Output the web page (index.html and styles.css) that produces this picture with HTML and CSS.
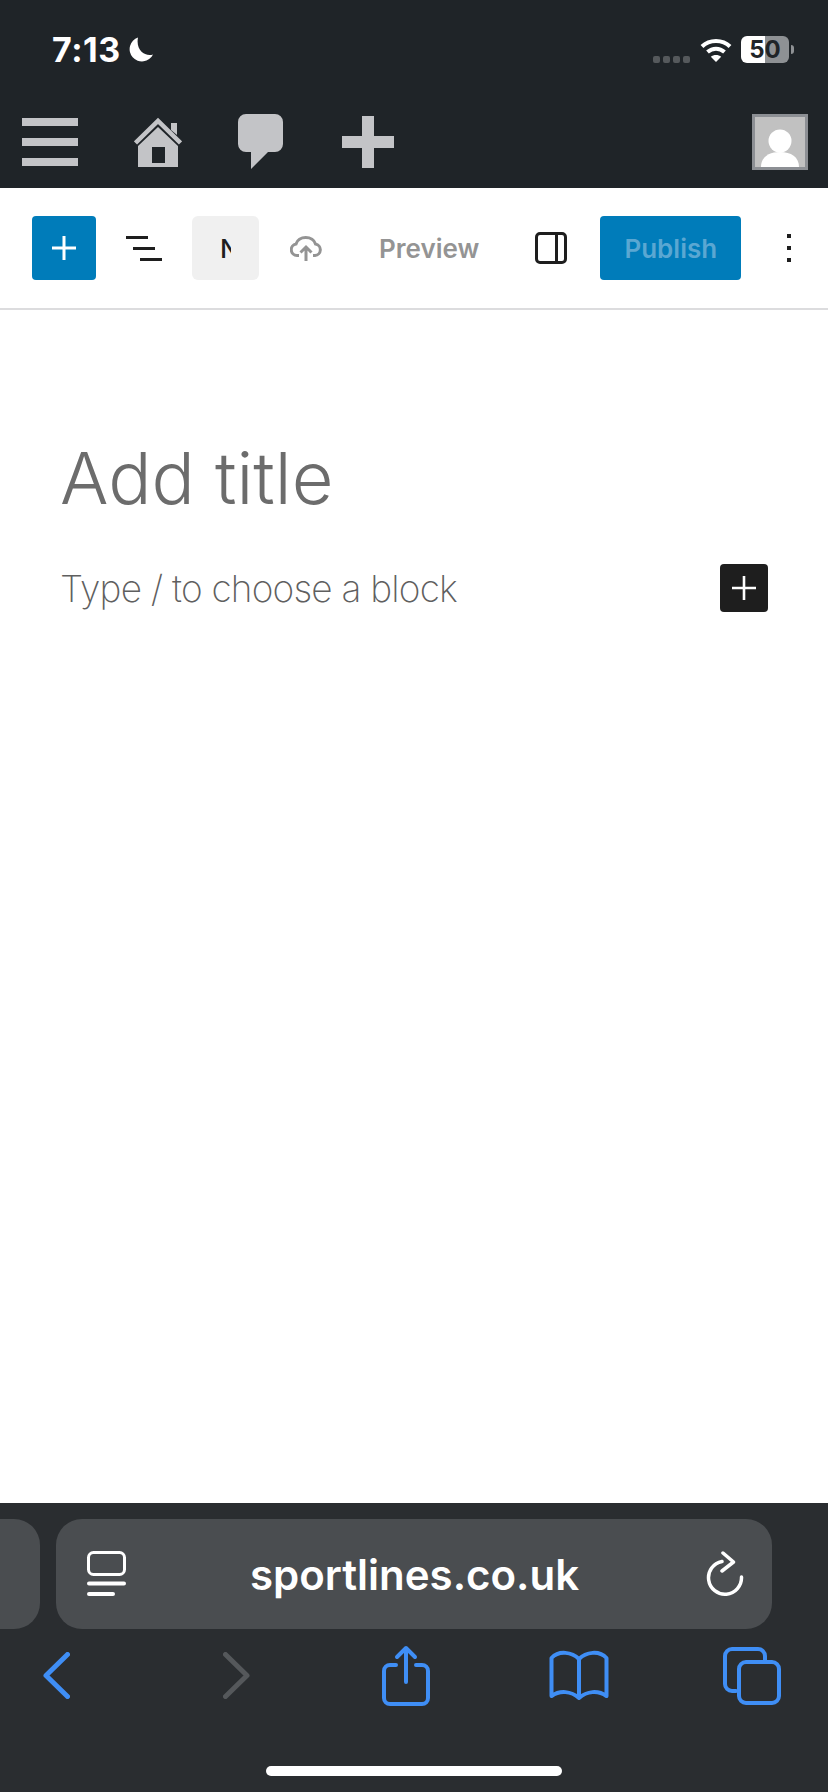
FILE: index.html
```html
<!DOCTYPE html>
<html lang="en">
<head>
    <meta charset="UTF-8">
    <meta name="viewport" content="width=device-width, initial-scale=1.0">
    <title>Add title</title>
    <link rel="stylesheet" href="styles.css">
</head>
<body>
    <!-- Phone status bar -->
    <div class="status-bar">
        <span class="clock">7:13</span>
        <svg class="moon" width="24" height="25" viewBox="0 0 24 25"><path d="M9 0.5A12.3 12.3 0 1 0 24 17.5C16 20 6.500 13 9 0.500Z" fill="#fff"/></svg>
        <span class="signal"><i></i><i></i><i></i><i></i></span>
        <svg class="wifi" width="32" height="24" viewBox="0 0 32 24" fill="none" stroke="#fff" stroke-width="4">
            <path d="M2 8.500C9.500 1 22.500 1 30 8.500"/>
            <path d="M7.500 14C12.500 9.500 19.500 9.500 24.500 14"/>
            <path d="M16 24L10.800 18.800C13.500 16.500 18.500 16.500 21.200 18.800Z" fill="#fff" stroke="none"/>
        </svg>
        <span class="battery">50</span>
        <span class="battery-nub"></span>
    </div>

    <!-- WP admin bar -->
    <div class="admin-bar">
        <span class="menu-icon"><i></i><i></i><i></i></span>
        <svg width="48" height="50" viewBox="0 0 48 50">
            <path fill="#c3c4c7" fill-rule="evenodd" d="M4 29L24 10L44 29V50H4ZM18 30V46H31V30Z"/>
            <path fill="#c3c4c7" d="M37 6H43V18L37 13Z"/>
            <path fill="none" stroke="#c3c4c7" stroke-width="4.500" d="M1.500 26L24 4L46.500 26"/>
        </svg>
        <svg width="45" height="55" viewBox="0 0 45 55"><path fill="#c3c4c7" d="M8 0H37A8 8 0 0 1 45 8V30A8 8 0 0 1 37 38H30L13 55V38H8A8 8 0 0 1 0 30V8A8 8 0 0 1 8 0Z"/></svg>
        <svg class="admin-new" width="52" height="52" viewBox="0 0 52 52"><path fill="#c3c4c7" d="M20 0H32V20H52V32H32V52H20V32H0V20H20Z"/></svg>
        <span class="avatar">
            <svg width="50" height="50" viewBox="0 0 50 50"><circle cx="25" cy="24" r="11.500" fill="#fff"/><path fill="#fff" d="M6 50C6 40 14 35 25 35C36 35 44 40 44 50Z"/></svg>
        </span>
    </div>

    <!-- Editor toolbar -->
    <div class="toolbar">
        <button class="tool-add">
            <svg width="24" height="24" viewBox="0 0 24 24"><path fill="#fff" d="M10.500 0H13.500V10.500H24V13.500H13.500V24H10.500V13.500H0V10.500H10.500Z"/></svg>
        </button>
        <svg class="tool-list" width="36" height="25" viewBox="0 0 36 25" fill="#1e1e1e"><rect x="0" y="0" width="22" height="3"/><rect x="7" y="11" width="22" height="3"/><rect x="14" y="22" width="22" height="3"/></svg>
        <button class="tool-doc"><span>N</span></button>
        <svg class="tool-cloud" width="32" height="26" viewBox="0 0 32 26" fill="none" stroke="#949494" stroke-width="3">
            <path d="M9 20.500H7A5.800 5.800 0 0 1 6 9A10 8.500 0 0 1 25.500 9A5.800 5.800 0 0 1 25 20.500H23"/>
            <path d="M16 26V12M10.500 17.500L16 12L21.500 17.500"/>
        </svg>
        <span class="tool-preview">Preview</span>
        <svg class="tool-panel" width="32" height="32" viewBox="0 0 32 32" fill="none" stroke="#1e1e1e" stroke-width="3"><rect x="1.500" y="1.500" width="29" height="29" rx="3.500"/><path d="M21.500 2V30"/></svg>
        <button class="tool-publish">Publish</button>
        <span class="tool-more"><i></i><i></i><i></i></span>
    </div>

    <!-- Post content -->
    <div class="content">
        <h1 class="post-title">Add title</h1>
        <div class="block-row">
            <p class="block-hint">Type / to choose a block</p>
            <button class="block-add">
                <svg width="24" height="24" viewBox="0 0 24 24"><path fill="#fff" d="M10.700 0H13.300V10.700H24V13.300H13.300V24H10.700V13.300H0V10.700H10.700Z"/></svg>
            </button>
        </div>
    </div>

    <!-- Safari bottom bar -->
    <div class="browser-bar">
        <div class="url-row">
            <div class="prev-tab"></div>
            <div class="url-pill">
                <svg width="39" height="46" viewBox="0 0 39 46" fill="none" stroke="#fff"><rect x="1.500" y="1.500" width="36" height="22" rx="5" stroke-width="3"/><path d="M2 32.500H37M2 43H26" stroke-width="4" stroke-linecap="round"/></svg>
                <span class="url-text">sportlines.co.uk</span>
                <svg width="38" height="46" viewBox="0 0 38 46" fill="none" stroke="#fff" stroke-width="3.500" stroke-linecap="round" stroke-linejoin="round">
                    <path d="M16 10.500A16.500 16.500 0 1 0 35.500 26"/>
                    <path d="M17 2L27.500 11L16 20"/>
                </svg>
            </div>
        </div>
        <div class="nav-row">
            <svg width="27" height="47" viewBox="0 0 27 47" fill="none" stroke="#3f8ef5" stroke-width="5" stroke-linecap="round" stroke-linejoin="round"><path d="M24.500 2.500L3 23.500L24.500 44.500"/></svg>
            <svg class="nav-forward" width="27" height="47" viewBox="0 0 27 47" fill="none" stroke="#55585b" stroke-width="5" stroke-linecap="round" stroke-linejoin="round"><path d="M2.500 2.500L24 23.500L2.500 44.500"/></svg>
            <svg class="nav-share" width="48" height="61" viewBox="0 0 48 61" fill="none" stroke="#3f8ef5" stroke-width="4" stroke-linecap="round" stroke-linejoin="round">
                <path d="M14 20H8A6 6 0 0 0 2 26V53A6 6 0 0 0 8 59H40A6 6 0 0 0 46 53V26A6 6 0 0 0 40 20H34"/>
                <path d="M24 37V3M15 12L24 3L33 12"/>
            </svg>
            <svg class="nav-book" width="60" height="51" viewBox="0 0 60 51" fill="none" stroke="#3f8ef5" stroke-width="4" stroke-linecap="round" stroke-linejoin="round">
                <path d="M30 9C23 2 10 0 2.500 8V46C11 40 22 41 30 48C38 41 49 40 57.500 46V8C50 0 37 2 30 9V47"/>
            </svg>
            <svg class="nav-tabs" width="58" height="58" viewBox="0 0 58 58" fill="none" stroke="#3f8ef5" stroke-width="4" stroke-linecap="round" stroke-linejoin="round">
                <path d="M13 44H9A7 7 0 0 1 2 37V9A7 7 0 0 1 9 2H35A7 7 0 0 1 42 9V14"/>
                <rect x="16" y="15" width="40" height="41" rx="7"/>
            </svg>
        </div>
        <div class="home-bar"></div>
    </div>
</body>
</html>
```

FILE: styles.css
```css
body {
    font-family: 'Inter', sans-serif;
    display: flex;
    flex-direction: column;
    width: 828px;
    height: 1792px;
    margin: 0;
    overflow: hidden;
    background-color: #fff;
}

button {
    border: none;
    padding: 0;
    font-family: inherit;
}

svg {
    display: block;
    flex: none;
}

/* status bar */

.status-bar {
    display: flex;
    align-items: center;
    height: 95px;
    padding: 4px 34px 0 52px;
    box-sizing: border-box;
    background-color: #1f2428;
}

.clock {
    font-size: 34px;
    font-weight: 700;
    color: #fff;
    letter-spacing: 0.5px;
}

.moon {
    margin-left: 8px;
}

.signal {
    display: flex;
    gap: 3px;
    margin: 20px 0 0 auto;
}

.signal i {
    width: 7px;
    height: 7px;
    border-radius: 2px;
    background-color: #55595c;
}

.wifi {
    margin-left: 10px;
}

.battery {
    width: 48px;
    height: 27px;
    margin-left: 9px;
    border-radius: 6px;
    background: linear-gradient(to right, #fff 50%, #8e9194 50%);
    font-size: 24px;
    font-weight: 700;
    line-height: 27px;
    text-align: center;
    color: #1f2428;
}

.battery-nub {
    width: 3px;
    height: 9px;
    margin-left: 2px;
    border-radius: 0 3px 3px 0;
    background-color: #8e9194;
}

/* admin bar */

.admin-bar {
    display: flex;
    align-items: center;
    gap: 56px;
    height: 93px;
    padding: 0 20px 0 22px;
    box-sizing: border-box;
    background-color: #1f2428;
}

.admin-new {
    margin-left: 3px;
}

.menu-icon {
    display: flex;
    flex-direction: column;
    gap: 12px;
    width: 56px;
}

.menu-icon i {
    height: 8px;
    background-color: #c3c4c7;
}

.avatar {
    width: 56px;
    height: 56px;
    margin-left: auto;
    border: 3px solid #8c8f94;
    box-sizing: border-box;
    background-color: #c1c1c1;
}

/* editor toolbar */

.toolbar {
    display: flex;
    align-items: center;
    height: 122px;
    padding-left: 32px;
    box-sizing: border-box;
    border-bottom: 2px solid #dcdcde;
}

.tool-add {
    display: flex;
    align-items: center;
    justify-content: center;
    width: 64px;
    height: 64px;
    border-radius: 4px;
    background-color: #007cba;
}

.tool-list {
    margin-left: 30px;
}

.tool-doc {
    display: flex;
    align-items: center;
    justify-content: center;
    width: 67px;
    height: 64px;
    margin-left: 30px;
    border-radius: 6px;
    background-color: #f0f0f0;
}

.tool-doc span {
    width: 11px;
    overflow: hidden;
    font-size: 26px;
    font-weight: 500;
    color: #1e1e1e;
}

.tool-cloud {
    margin-left: 31px;
}

.tool-preview {
    margin-left: 57px;
    font-size: 26px;
    font-weight: 600;
    color: #949494;
}

.tool-panel {
    margin-left: 56px;
}

.tool-publish {
    width: 141px;
    height: 64px;
    margin-left: 33px;
    border-radius: 4px;
    background-color: #007cba;
    font-size: 26px;
    font-weight: 600;
    color: #5aa7d2;
}

.tool-more {
    display: flex;
    flex-direction: column;
    gap: 8px;
    margin-left: 46px;
}

.tool-more i {
    width: 4px;
    height: 4px;
    background-color: #1e1e1e;
}

/* content */

.content {
    flex: 1;
    padding: 0 60px;
}

.post-title {
    margin: 125px 0 0;
    font-size: 72px;
    font-weight: 300;
    line-height: 86px;
    color: #6c6c6c;
}

.block-row {
    display: flex;
    align-items: center;
    justify-content: space-between;
    margin-top: 43px;
}

.block-hint {
    margin: 0;
    font-size: 37px;
    font-weight: 200;
    letter-spacing: -0.8px;
    color: #5f5f5f;
}

.block-add {
    display: flex;
    align-items: center;
    justify-content: center;
    width: 48px;
    height: 48px;
    border-radius: 4px;
    background-color: #1e1e1e;
}

/* browser bar */

.browser-bar {
    height: 289px;
    padding-top: 16px;
    box-sizing: border-box;
    background-color: #2a2d30;
}

.url-row {
    display: flex;
    gap: 16px;
    height: 110px;
}

.prev-tab {
    width: 40px;
    border-radius: 0 26px 26px 0;
    background-color: #4a4d50;
}

.url-pill {
    display: flex;
    align-items: center;
    justify-content: space-between;
    width: 716px;
    padding: 0 28px 0 31px;
    box-sizing: border-box;
    border-radius: 26px;
    background-color: #4a4d50;
}

.url-text {
    margin-right: 3px;
    font-size: 42px;
    font-weight: 600;
    color: #fff;
}

.nav-row {
    display: flex;
    align-items: center;
    height: 61px;
    margin-top: 16px;
    padding-left: 43px;
}

.nav-forward {
    margin-left: 153px;
}

.nav-share {
    margin-left: 132px;
}

.nav-book {
    margin-left: 119px;
}

.nav-tabs {
    margin-left: 114px;
}

.home-bar {
    width: 296px;
    height: 10px;
    margin: 60px auto 0;
    border-radius: 5px;
    background-color: #fff;
}
```
